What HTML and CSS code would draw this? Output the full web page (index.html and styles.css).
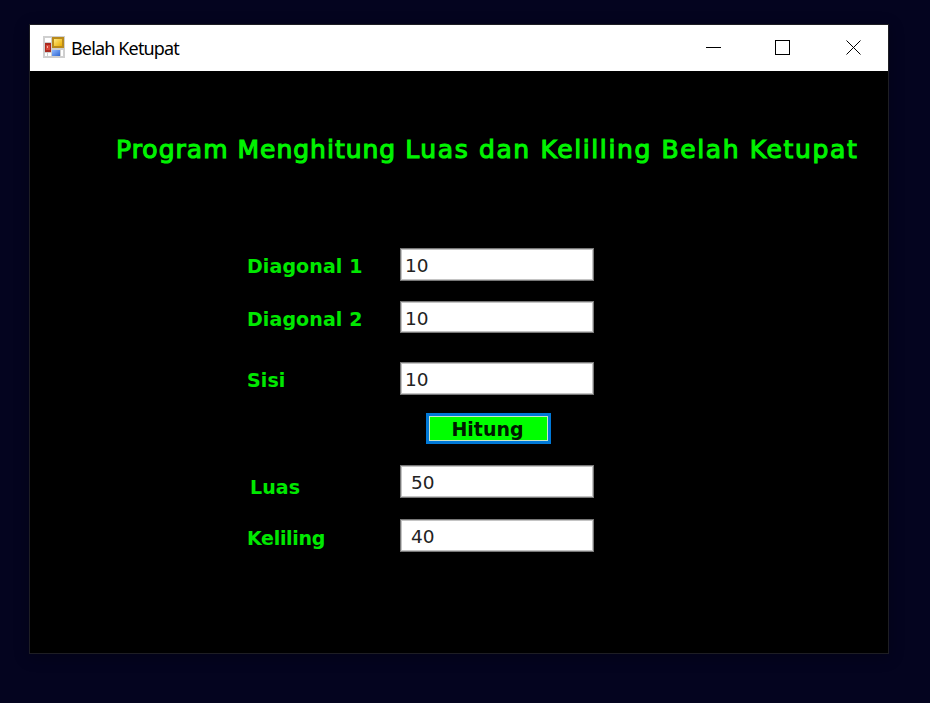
FILE: index.html
```html
<!DOCTYPE html>
<html lang="id">
<head>
<meta charset="utf-8">
<title>Belah Ketupat</title>
<link rel="stylesheet" href="styles.css">
</head>
<body>
<main class="window">
  <header class="titlebar">
    <svg class="app-icon" width="22" height="22" viewBox="0 0 22 22">
      <defs>
        <linearGradient id="gold" x2="1" y2="1"><stop stop-color="#ffe880"/><stop offset="1" stop-color="#e9ac00"/></linearGradient>
        <linearGradient id="blue" x2="1" y2="1"><stop stop-color="#8fb9ff"/><stop offset="1" stop-color="#2f66d0"/></linearGradient>
      </defs>
      <path fill="#cfcfcf" d="M0 0h22v22H0z"/>
      <path fill="#fff" d="M2 2h6v4H2zM2 17h2v3H2zM5 17h3v3H5zM18 14h2v6h-2z"/>
      <path fill="#b98a1c" d="M9 1h12v11H9z"/>
      <path fill="url(#gold)" d="M11 3h8v7h-8z"/>
      <path fill="#a92a20" d="M2 7h6v9H2z"/>
      <path fill="#d9483a" d="M3 9h4v5H3z"/>
      <path fill="#f6b4a4" d="M4 10h1v2H4z"/>
      <path fill="url(#blue)" d="M9 14h8v6H9z"/>
    </svg>
    <span class="caption">Belah Ketupat</span>
    <svg class="controls" width="156" height="16" viewBox="0 0 156 16" fill="none" stroke="#000">
      <path d="M0 7.500h15M69.500.5h14v14h-14z" shape-rendering="crispEdges"/>
      <path d="M140.500.5l14 14M154.500.5l-14 14"/>
    </svg>
  </header>
  <h1 class="heading"><span class="tight">Program Menghitung </span>Luas dan Kelilling Belah Ketupat</h1>
  <form class="form">
    <div class="row"><label class="label" for="d1">Diagonal 1</label><input class="field" id="d1" value="10"></div>
    <div class="row second"><label class="label" for="d2">Diagonal 2</label><input class="field" id="d2" value="10"></div>
    <div class="row side"><label class="label" for="s">Sisi</label><input class="field" id="s" value="10"></div>
    <button class="button" type="button">Hitung</button>
    <div class="row area"><label class="label luas" for="l">Luas</label><input class="field result" id="l" value="50"></div>
    <div class="row perimeter"><label class="label keliling" for="k">Keliling</label><input class="field result" id="k" value="40"></div>
  </form>
</main>
</body>
</html>
```
FILE: styles.css
```css
* { box-sizing: border-box; }
body {
  margin: 0;
  height: 703px;
  padding: 24px 0 0 29px;
  overflow: hidden;
  background: #04041f;
  font-family: "DejaVu Sans", sans-serif;
}
.window {
  width: 860px;
  height: 630px;
  border: 1px solid #1e1e24;
  background: #000;
  box-shadow: 0 3px 14px rgba(0, 0, 0, .25);
}
.titlebar {
  display: flex;
  align-items: center;
  height: 46px;
  padding: 0 26px 0 13px;
  background: #fff;
}
.app-icon { margin-bottom: 2px; }
.caption {
  margin-left: 6px;
  font: 18px/24px "Noto Sans", sans-serif;
  letter-spacing: -.85px;
  color: #000;
}
.controls { margin-left: auto; }
.heading {
  margin: 62px 0 0 86px;
  font-size: 25px;
  font-weight: 400;
  line-height: 34px;
  letter-spacing: 1.62px;
  white-space: nowrap;
  color: #00f400;
  -webkit-text-stroke: 1.100px #00f400;
}
.tight { letter-spacing: 1px; }
.form { padding: 81px 0 0 216px; }
.row {
  display: grid;
  grid-template-columns: 154px 194px;
  height: 33px;
}
.second { margin-top: 20px; }
.side { margin-top: 28px; }
.area { margin-top: 21px; }
.perimeter { margin-top: 21px; }
.label {
  padding: 6px 0 0 1px;
  font-size: 19px;
  font-weight: 700;
  line-height: 24px;
  letter-spacing: .1px;
  white-space: nowrap;
  color: #00e800;
}
.luas { padding: 10px 0 0 4px; }
.keliling { padding-top: 7px; letter-spacing: -.3px; }
.field {
  width: 194px;
  height: 33px;
  border: 1px solid #777;
  border-radius: 0;
  padding: 2px 4px 0;
  background: #fff;
  box-shadow: inset 0 0 0 1px #c4c4c4;
  color: #222;
  font: 18.500px/24px "DejaVu Sans", sans-serif;
  outline: 0;
}
.second .field { height: 32px; }
.result { padding-left: 10px; }
.button {
  display: block;
  width: 125px;
  height: 31px;
  margin: 18px 0 0 180px;
  border: 3px solid #0078d7;
  border-radius: 0;
  padding: 1px 2px 0 0;
  background: #0f0;
  box-shadow: inset 0 0 0 1px #c8e6c8;
  color: #001800;
  font: 700 19px/24px "DejaVu Sans", sans-serif;
}
```
